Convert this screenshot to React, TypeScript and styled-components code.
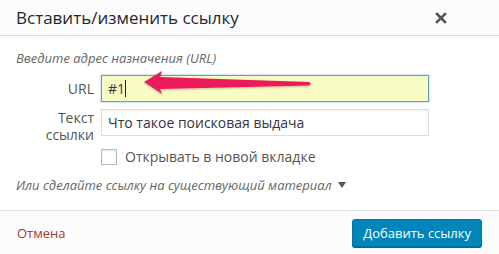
import React from "react";
import styled, { createGlobalStyle } from "styled-components";

const Global = createGlobalStyle`
  html, body { margin: 0; padding: 0; background: #fff; }
  body { font-family: "Open Sans", "Noto Sans", sans-serif; color: #444; }
  * { box-sizing: border-box; }
`;

const Dialog = styled.div`
  width: 499px;
  height: 254px;
  background: #fff;
  display: flex;
  flex-direction: column;
  overflow: hidden;
`;

const Header = styled.div`
  height: 36px;
  flex: none;
  display: flex;
  align-items: center;
  justify-content: space-between;
  background: #fcfcfc;
  border-bottom: 1px solid #dddddd;
  padding: 0 0 0 16px;
`;

const Title = styled.h1`
  margin: 0;
  font-size: 17px;
  font-weight: 400;
  line-height: 36px;
  color: #23282d;
`;

const Close = styled.button`
  width: 36px;
  height: 36px;
  margin-right: 40px;
  border: 0;
  background: none;
  padding: 0;
  display: flex;
  align-items: center;
  justify-content: center;
  color: #555;
`;

const Body = styled.div`
  flex: 1;
  padding: 12px 16px 0;
  display: flex;
  flex-direction: column;
`;

const Hint = styled.p`
  margin: 0;
  font-size: 13px;
  line-height: 20px;
  font-style: italic;
  color: #666;
`;

const Fields = styled.div`
  margin-top: 7px;
  display: grid;
  grid-template-columns: 78px 328px;
  column-gap: 7px;
  row-gap: 7px;
  align-items: start;
`;

const Label = styled.label<{ $two?: boolean }>`
  text-align: right;
  font-size: 14px;
  line-height: ${(p) => (p.$two ? "17px" : "27px")};
  color: #555;
`;

const InputWrap = styled.div`
  position: relative;
`;

const Input = styled.div<{ $focus?: boolean }>`
  height: 27px;
  padding: 0 6px;
  font-size: 14px;
  line-height: 25px;
  color: #32373c;
  background: ${(p) => (p.$focus ? "#f9fbc4" : "#fff")};
  border: 1px solid ${(p) => (p.$focus ? "#6b9cae" : "#dddddd")};
  box-shadow: ${(p) =>
    p.$focus
      ? "0 0 2px rgba(30, 160, 220, 0.6)"
      : "inset 0 1px 2px rgba(0, 0, 0, 0.07)"};
  white-space: nowrap;
`;

const Caret = styled.span`
  display: inline-block;
  width: 1px;
  height: 17px;
  background: #222;
  vertical-align: -3px;
`;

const Arrow = styled.svg`
  position: absolute;
  left: 42px;
  top: -8px;
  overflow: visible;
  pointer-events: none;
`;

const CheckRow = styled.div`
  grid-column: 2;
  display: flex;
  align-items: center;
  gap: 8px;
  margin-top: -3px;
  font-size: 14px;
  color: #555;
`;

const Box = styled.span`
  width: 16px;
  height: 16px;
  border: 1px solid #b4b9be;
  background: #fff;
  box-shadow: inset 0 1px 2px rgba(0, 0, 0, 0.1);
`;

const Toggle = styled.p`
  margin: 9px 0 0;
  font-size: 13px;
  line-height: 20px;
  font-style: italic;
  color: #666;
  display: flex;
  align-items: center;
  gap: 6px;
`;

const Footer = styled.div`
  height: 44px;
  flex: none;
  background: #fcfcfc;
  border-top: 1px solid #dddddd;
  display: flex;
  align-items: center;
  justify-content: space-between;
  padding: 0 17px 0 17px;
`;

const Cancel = styled.a`
  font-size: 13px;
  color: #a33;
  text-decoration: none;
`;

const Primary = styled.button`
  height: 28px;
  padding: 0 10px;
  font-family: inherit;
  font-size: 13px;
  color: #fff;
  background: #0085ba;
  border: 1px solid #0073aa;
  border-radius: 3px;
  box-shadow: 0 1px 0 #006799;
`;

export default function App() {
  return (
    <>
      <Global />
      <Dialog>
        <Header>
          <Title>Вставить/изменить ссылку</Title>
          <Close aria-label="Закрыть">
            <svg width="12" height="12" viewBox="0 0 12 12">
              <path d="M2 2 L10 10 M10 2 L2 10" stroke="#555" strokeWidth="2.6" strokeLinecap="square" />
            </svg>
          </Close>
        </Header>
        <Body>
          <Hint>Введите адрес назначения (URL)</Hint>
          <Fields>
            <Label>URL</Label>
            <InputWrap>
              <Input $focus>
                #1<Caret />
              </Input>
              <Arrow width="170" height="26" viewBox="0 0 170 26">
                <defs>
                  <filter id="sh" x="-10%" y="-40%" width="120%" height="180%">
                    <feDropShadow dx="0" dy="1" stdDeviation="1" floodColor="#000" floodOpacity="0.25" />
                  </filter>
                </defs>
                <polygon
                  points="1,15 19,4 17,10 166,15 168,16.5 166,18.5 17,22 19,27"
                  fill="#ec1a5c"
                  filter="url(#sh)"
                />
              </Arrow>
            </InputWrap>
            <Label $two>
              Текст
              <br />
              ссылки
            </Label>
            <Input>Что такое поисковая выдача</Input>
            <CheckRow>
              <Box />
              Открывать в новой вкладке
            </CheckRow>
          </Fields>
          <Toggle>
            Или сделайте ссылку на существующий материал
            <svg width="8" height="6" viewBox="0 0 8 6">
              <path d="M0 0 L8 0 L4 6 Z" fill="#555" />
            </svg>
          </Toggle>
        </Body>
        <Footer>
          <Cancel href="#">Отмена</Cancel>
          <Primary>Добавить ссылку</Primary>
        </Footer>
      </Dialog>
    </>
  );
}
